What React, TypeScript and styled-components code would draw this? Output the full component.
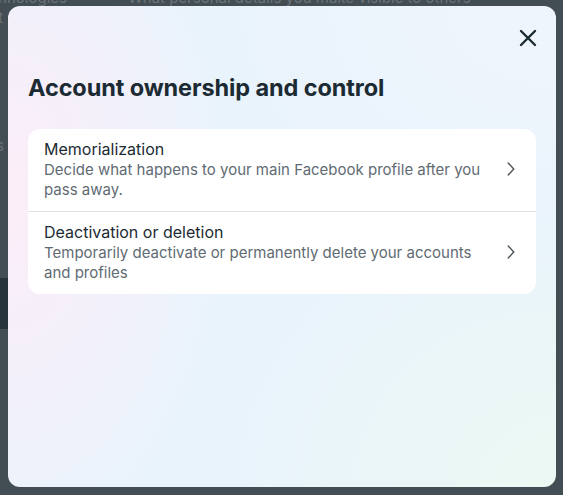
import React from 'react';
import styled, { createGlobalStyle } from 'styled-components';

const GlobalStyle = createGlobalStyle`
  html, body {
    margin: 0;
    padding: 0;
    background: #434d54;
    overflow: hidden;
  }
  body {
    font-family: Inter, "Noto Sans", "Liberation Sans", sans-serif;
  }
`;

const Page = styled.div`
  position: relative;
  width: 563px;
  height: 495px;
  overflow: hidden;
  background: #434d54;
`;

const Backdrop = styled.div`
  display: grid;
  grid-template-columns: 128px 1fr;
  margin-top: -12px;
  color: #6a7378;
  font-size: 15px;
  line-height: 20px;
`;

const BackColumn = styled.div`
  display: flex;
  flex-direction: column;
  white-space: nowrap;
`;

const BackLine = styled.span<{ $indent?: number; $gap?: number }>`
  margin-left: ${({ $indent }) => $indent ?? 0}px;
  margin-top: ${({ $gap }) => $gap ?? 0}px;
`;

const BackButton = styled.div`
  margin-top: 122px;
  width: 40px;
  height: 51px;
  background: #27343b;
`;

const Overlay = styled.div`
  position: absolute;
  inset: 0;
  padding: 6px 7px 8px 8px;
  box-sizing: border-box;
`;

const Dialog = styled.div`
  width: 548px;
  height: 481px;
  box-sizing: border-box;
  border-radius: 12px;
  padding: 20px 20px 20px;
  display: flex;
  flex-direction: column;
  background:
    radial-gradient(ellipse 40% 75% at 0% 40%, rgba(252, 237, 248, 1), rgba(252, 237, 248, 0) 100%),
    radial-gradient(ellipse 60% 60% at 100% 100%, rgba(236, 249, 242, 0.95), rgba(236, 249, 242, 0) 100%),
    radial-gradient(ellipse 60% 50% at 100% 0%, rgba(240, 245, 253, 1), rgba(240, 245, 253, 0) 100%),
    #e9f3fc;
`;

const Header = styled.div`
  display: flex;
  justify-content: flex-end;
`;

const CloseButton = styled.button`
  width: 24px;
  height: 24px;
  margin-right: -4px;
  padding: 0;
  border: none;
  background: transparent;
  display: flex;
  align-items: center;
  justify-content: center;
  cursor: pointer;
  color: #1c2b33;
`;

const Title = styled.h2`
  margin: 24px 0 27px;
  font-size: 23.5px;
  line-height: 28px;
  font-weight: 700;
  color: #1c2b33;
  letter-spacing: -0.1px;
`;

const Card = styled.div`
  background: #ffffff;
  border-radius: 12px;
  overflow: hidden;
`;

const Row = styled.div<{ $last?: boolean }>`
  display: flex;
  align-items: center;
  gap: 12px;
  padding: 9px 21px 11px 16px;
  border-bottom: ${({ $last }) => ($last ? 'none' : '1px solid #dfe2e5')};
  cursor: pointer;
`;

const RowText = styled.div`
  flex: 1;
  min-width: 0;
`;

const RowTitle = styled.div`
  font-size: 16px;
  line-height: 22px;
  font-weight: 400;
  color: #1c2b33;
`;

const RowDesc = styled.div`
  font-size: 15px;
  line-height: 20px;
  color: #5f6b73;
`;

const Chevron = () => (
  <svg width="8" height="14" viewBox="0 0 8 14" fill="none">
    <polyline points="1.2,1 6.8,7 1.2,13" stroke="#4b5359" strokeWidth="1.4" strokeLinecap="round" strokeLinejoin="round" />
  </svg>
);

const CloseIcon = () => (
  <svg width="18" height="18" viewBox="0 0 18 18" fill="none">
    <path d="M2 2 L16 16 M16 2 L2 16" stroke="currentColor" strokeWidth="2.4" strokeLinecap="round" />
  </svg>
);

const items = [
  {
    title: 'Memorialization',
    desc: 'Decide what happens to your main Facebook profile after you pass away.',
  },
  {
    title: 'Deactivation or deletion',
    desc: 'Temporarily deactivate or permanently delete your accounts and profiles',
  },
];

export default function App() {
  return (
    <Page>
      <GlobalStyle />
      <Backdrop>
        <BackColumn>
          <BackLine $indent={-24}>technologies</BackLine>
          <BackLine $indent={-2}>t</BackLine>
          <BackLine $indent={-4} $gap={108}>s</BackLine>
          <BackButton />
        </BackColumn>
        <BackColumn>
          <BackLine>What personal details you make visible to others</BackLine>
        </BackColumn>
      </Backdrop>
      <Overlay>
        <Dialog>
          <Header>
            <CloseButton aria-label="Close">
              <CloseIcon />
            </CloseButton>
          </Header>
          <Title>Account ownership and control</Title>
          <Card>
            {items.map((item, i) => (
              <Row key={item.title} $last={i === items.length - 1}>
                <RowText>
                  <RowTitle>{item.title}</RowTitle>
                  <RowDesc>{item.desc}</RowDesc>
                </RowText>
                <Chevron />
              </Row>
            ))}
          </Card>
        </Dialog>
      </Overlay>
    </Page>
  );
}
